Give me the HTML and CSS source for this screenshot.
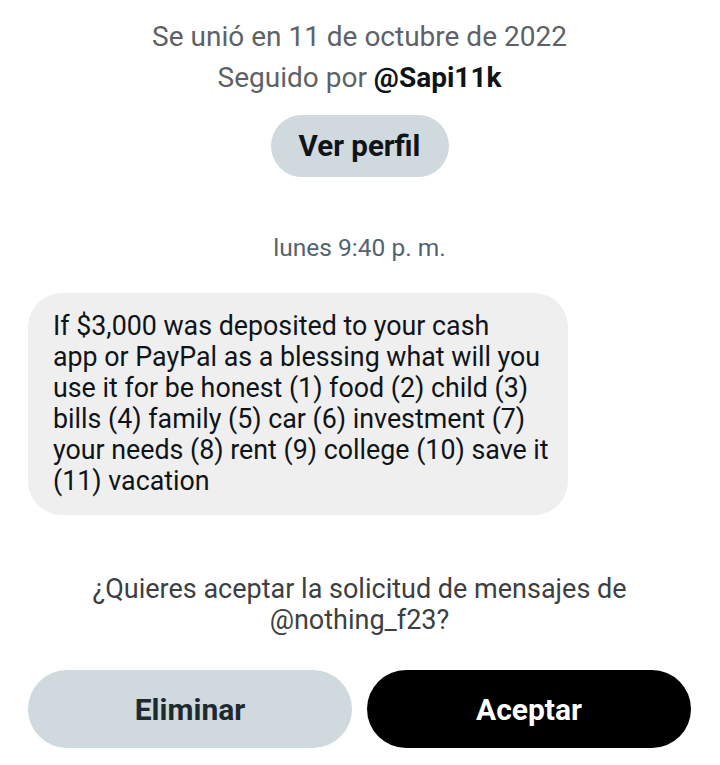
FILE: index.html
```html
<!DOCTYPE html>
<html lang="es">
<head>
    <meta charset="UTF-8">
    <meta name="viewport" content="width=device-width, initial-scale=1.0">
    <title>Solicitud de mensaje</title>
    <link rel="stylesheet" href="styles.css">
</head>
<body>
    <div class="profile-info">
        <p class="joined">Se unió en 11 de octubre de 2022</p>
        <p class="followed">Seguido por <strong>@Sapi11k</strong></p>
        <button class="btn-profile">Ver perfil</button>
    </div>

    <div class="chat">
        <p class="timestamp">lunes 9:40 p. m.</p>
        <div class="bubble">
            <p>If $3,000 was deposited to your cash<br>
            app or PayPal as a blessing what will you<br>
            use it for be honest (1) food (2) child (3)<br>
            bills (4) family (5) car (6) investment (7)<br>
            your needs (8) rent (9) college (10) save it<br>
            (11) vacation</p>
        </div>
    </div>

    <div class="request">
        <p class="question">¿Quieres aceptar la solicitud de mensajes de @nothing_f23?</p>
        <div class="actions">
            <button class="btn btn-delete">Eliminar</button>
            <button class="btn btn-accept">Aceptar</button>
        </div>
    </div>
</body>
</html>
```

FILE: styles.css
```css
/* Estilos generales */
* {
    margin: 0;
    padding: 0;
    box-sizing: border-box;
}
body {
    font-family: Roboto, "Noto Sans", Arial, sans-serif;
    background-color: #ffffff;
    color: #0f1419;
    width: 720px;
    height: 765px;
    padding: 16px 29px 0 28px;
    overflow: hidden;
}

/* Info del perfil */
.profile-info {
    display: flex;
    flex-direction: column;
    align-items: center;
}
.joined,
.followed {
    font-size: 28px;
    line-height: 41px;
    color: #5e6266;
}
.followed strong {
    color: #0f1419;
    font-weight: 700;
}
.btn-profile {
    margin-top: 17px;
    width: 178px;
    height: 62px;
    border: none;
    border-radius: 31px;
    background-color: #cfd9de;
    color: #0f1419;
    font-family: inherit;
    font-size: 29.5px;
    font-weight: 700;
}

/* Conversación */
.chat {
    margin-top: 56px;
}
.timestamp {
    text-align: center;
    font-size: 24.5px;
    line-height: 30px;
    color: #536471;
}
.bubble {
    margin-top: 30px;
    width: 540px;
    padding: 18px 10px 18px 25px;
    background-color: #efefef;
    border-radius: 34px;
}
.bubble p {
    font-size: 26.8px;
    line-height: 31px;
    color: #0f1419;
    white-space: nowrap;
}

/* Solicitud */
.request {
    margin-top: 59px;
}
.question {
    text-align: center;
    font-size: 27px;
    line-height: 31px;
    color: #3c4043;
    padding: 0 50px;
}
.actions {
    display: flex;
    gap: 15px;
    margin-top: 34px;
}
.btn {
    flex: 1;
    height: 78px;
    border: none;
    border-radius: 39px;
    font-family: inherit;
    font-size: 30px;
    font-weight: 700;
}
.btn-delete {
    background-color: #cfd9de;
    color: #1f2a30;
}
.btn-accept {
    background-color: #000000;
    color: #ffffff;
}
```
